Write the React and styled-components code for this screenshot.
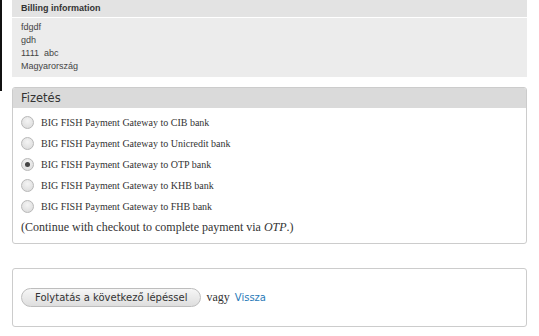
import React from 'react';
import styled, { createGlobalStyle } from 'styled-components';

const GlobalStyle = createGlobalStyle`
  html, body {
    margin: 0;
    padding: 0;
    background: #fff;
  }
  body {
    font-family: "Liberation Sans", Arial, sans-serif;
    color: #333;
  }
`;

const Page = styled.div`
  display: flex;
  align-items: flex-start;
  width: 539px;
  height: 336px;
  overflow: hidden;
`;

const EdgeStrip = styled.div`
  flex-shrink: 0;
  width: 2px;
  height: 91px;
  background: #111;
`;

const Main = styled.div`
  display: flex;
  flex-direction: column;
  width: 515px;
  margin-left: 10px;
`;

const Billing = styled.section`
  background: #ececec;
`;

const BillingHeader = styled.div`
  height: 17px;
  padding-left: 9px;
  background: #e3e3e3;
  border-bottom: 1px solid #fff;
  font-size: 9px;
  font-weight: bold;
  line-height: 16px;
  color: #333;
`;

const BillingBody = styled.div`
  padding: 3px 9px 4px;
  font-size: 9px;
  line-height: 13px;
  color: #444;
`;

const Fieldset = styled.section`
  margin-top: 10px;
  border: 1px solid #ccc;
  border-radius: 3px;
  overflow: hidden;
`;

const Legend = styled.div`
  height: 20px;
  padding-left: 8px;
  background: #dadada;
  font-family: "DejaVu Sans", sans-serif;
  font-size: 11.5px;
  line-height: 20px;
  color: #333;
`;

const Options = styled.div`
  display: flex;
  flex-direction: column;
  padding: 4px 8px 5px;
`;

const Option = styled.label`
  display: flex;
  align-items: center;
  height: 21px;
  font-family: "Liberation Serif", serif;
  font-size: 10px;
  color: #333;
`;

const Radio = styled.span`
  flex-shrink: 0;
  width: 11px;
  height: 11px;
  margin-right: 7px;
  border: 1px solid #b8b8b8;
  border-radius: 50%;
  background: radial-gradient(circle at 50% 35%, #f4f4f4 0%, #d8d8d8 100%);
  display: flex;
  align-items: center;
  justify-content: center;
  &::after {
    content: '';
    width: 5px;
    height: 5px;
    border-radius: 50%;
    background: ${({ checked }) => (checked ? '#444' : 'transparent')};
  }
`;

const Note = styled.div`
  height: 21px;
  display: flex;
  align-items: center;
  font-family: "Liberation Serif", serif;
  font-size: 12px;
  color: #333;
`;

const Actions = styled.section`
  display: flex;
  align-items: center;
  height: 57px;
  margin-top: 24px;
  padding-left: 8px;
  border: 1px solid #ccc;
  border-radius: 3px;
`;

const Button = styled.button`
  height: 19px;
  padding: 0 13px;
  border: 1px solid #bdbdbd;
  border-radius: 10px;
  background: linear-gradient(#f6f6f6, #dedede);
  font-family: "DejaVu Sans", sans-serif;
  font-size: 10px;
  color: #333;
`;

const Or = styled.span`
  margin-left: 5px;
  font-family: "Liberation Serif", serif;
  font-size: 12px;
  color: #333;
`;

const Link = styled.a`
  margin-left: 5px;
  font-family: "DejaVu Sans", sans-serif;
  font-size: 10px;
  color: #2a7ab8;
  text-decoration: none;
`;

const banks = ['CIB', 'Unicredit', 'OTP', 'KHB', 'FHB'];

export default function App() {
  return (
    <>
      <GlobalStyle />
      <Page>
        <EdgeStrip />
        <Main>
          <Billing>
            <BillingHeader>Billing information</BillingHeader>
            <BillingBody>
              <div>fdgdf</div>
              <div>gdh</div>
              <div>1111&nbsp; abc</div>
              <div>Magyarország</div>
            </BillingBody>
          </Billing>
          <Fieldset>
            <Legend>Fizetés</Legend>
            <Options>
              {banks.map((bank) => (
                <Option key={bank}>
                  <Radio checked={bank === 'OTP'} />
                  BIG FISH Payment Gateway to {bank} bank
                </Option>
              ))}
              <Note>
                (Continue with checkout to complete payment via&nbsp;<i>OTP</i>.)
              </Note>
            </Options>
          </Fieldset>
          <Actions>
            <Button type="button">Folytatás a következő lépéssel</Button>
            <Or>vagy</Or>
            <Link href="#">Vissza</Link>
          </Actions>
        </Main>
      </Page>
    </>
  );
}
